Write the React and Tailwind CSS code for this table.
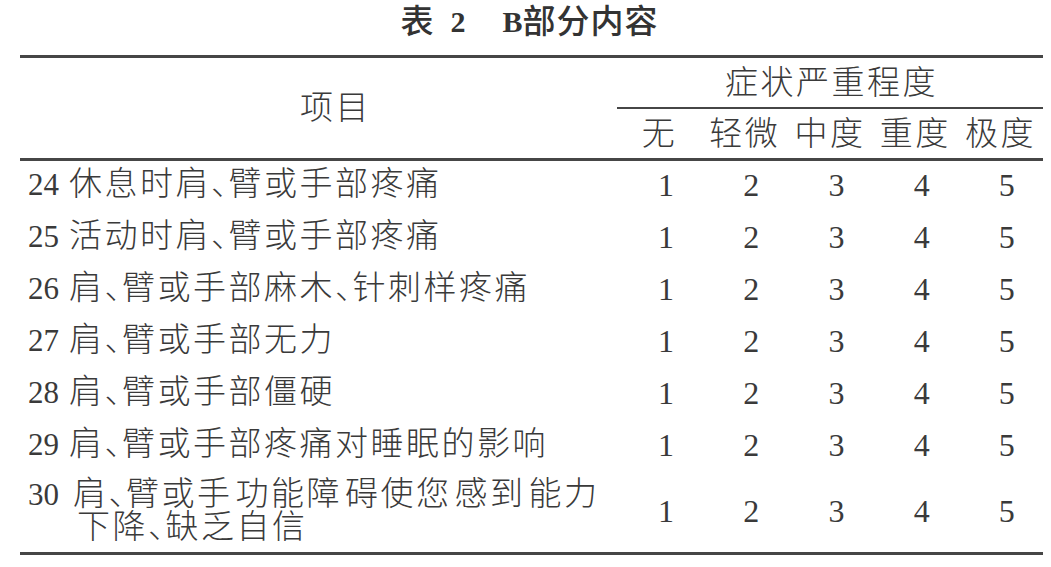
import React from "react";

const rows = [
  ["24", "休息时肩、臂或手部疼痛"],
  ["25", "活动时肩、臂或手部疼痛"],
  ["26", "肩、臂或手部麻木、针刺样疼痛"],
  ["27", "肩、臂或手部无力"],
  ["28", "肩、臂或手部僵硬"],
  ["29", "肩、臂或手部疼痛对睡眠的影响"],
];

function CJK({ text }) {
  const parts = text.split("、");
  return (
    <span className="tracking-[2.5px] text-[33px]">
      {parts.map((p, i) => (
        <React.Fragment key={i}>
          {p}
          {i < parts.length - 1 && <span className="tracking-[-15.5px]">、</span>}
        </React.Fragment>
      ))}
    </span>
  );
}

function Scores() {
  return (
    <>
      {[1, 2, 3, 4, 5].map((n) => (
        <div key={n} className="flex items-center justify-center pl-[13px] text-[32px]">
          {n}
        </div>
      ))}
    </>
  );
}

export default function App() {
  return (
    <div className="w-[1051px] h-[567px] bg-white text-[#3a3a3a] font-['Liberation_Serif','Noto_Sans_CJK_SC',serif] font-light">
      <div className="h-[55px] flex justify-center items-start pt-[4px] pl-[8px] leading-[36px] text-[#333]">
        <span className="text-[33px] font-medium">表</span>
        <span className="text-[30px] font-bold ml-[17px]">2</span>
        <span className="text-[30px] font-bold ml-[37px]">B</span>
        <span className="text-[33px] tracking-[1px] font-medium">部分内容</span>
      </div>
      <div className="ml-[20px] w-[1023px] border-t-[3px] border-b-[3px] border-[#464646] text-[31px] leading-[32px]">
        <div className="grid grid-cols-[597px_426px] border-b-[3px] border-[#464646]">
          <div className="flex items-center justify-center pl-[34px]">
            <CJK text="项目" />
          </div>
          <div className="flex flex-col">
            <div className="h-[49px] flex items-center justify-center pl-[3px]">
              <CJK text="症状严重程度" />
            </div>
            <div className="h-[2px] bg-[#464646]"></div>
            <div className="h-[49px] grid grid-cols-5 items-center">
              {["无", "轻微", "中度", "重度", "极度"].map((h) => (
                <div key={h} className="flex justify-center">
                  <CJK text={h} />
                </div>
              ))}
            </div>
          </div>
        </div>
        {rows.map(([num, txt]) => (
          <div key={num} className="grid grid-cols-[597px_repeat(5,85.2px)] h-[52px] pt-[7px] pb-[13px]">
            <div className="flex items-center pl-[8px]">
              <span>{num}</span>
              <span className="ml-[10px]">
                <CJK text={txt} />
              </span>
            </div>
            <Scores />
          </div>
        ))}
        <div className="grid grid-cols-[597px_repeat(5,85.2px)] pt-[5px] pb-[8px]">
          <div className="flex flex-col pl-[8px]">
            <div className="flex items-center">
              <span>30</span>
              <span className="ml-[14px] flex">
                <CJK text="肩、臂或手" />
                <span className="ml-[3px]"><CJK text="功能障" /></span>
                <span className="ml-[3px]"><CJK text="碍使您" /></span>
                <span className="ml-[3px]"><CJK text="感到" /></span>
                <span className="ml-[3px]"><CJK text="能力" /></span>
              </span>
            </div>
            <div className="pl-[49px]">
              <CJK text="下降、缺乏自信" />
            </div>
          </div>
          <Scores />
        </div>
      </div>
    </div>
  );
}
